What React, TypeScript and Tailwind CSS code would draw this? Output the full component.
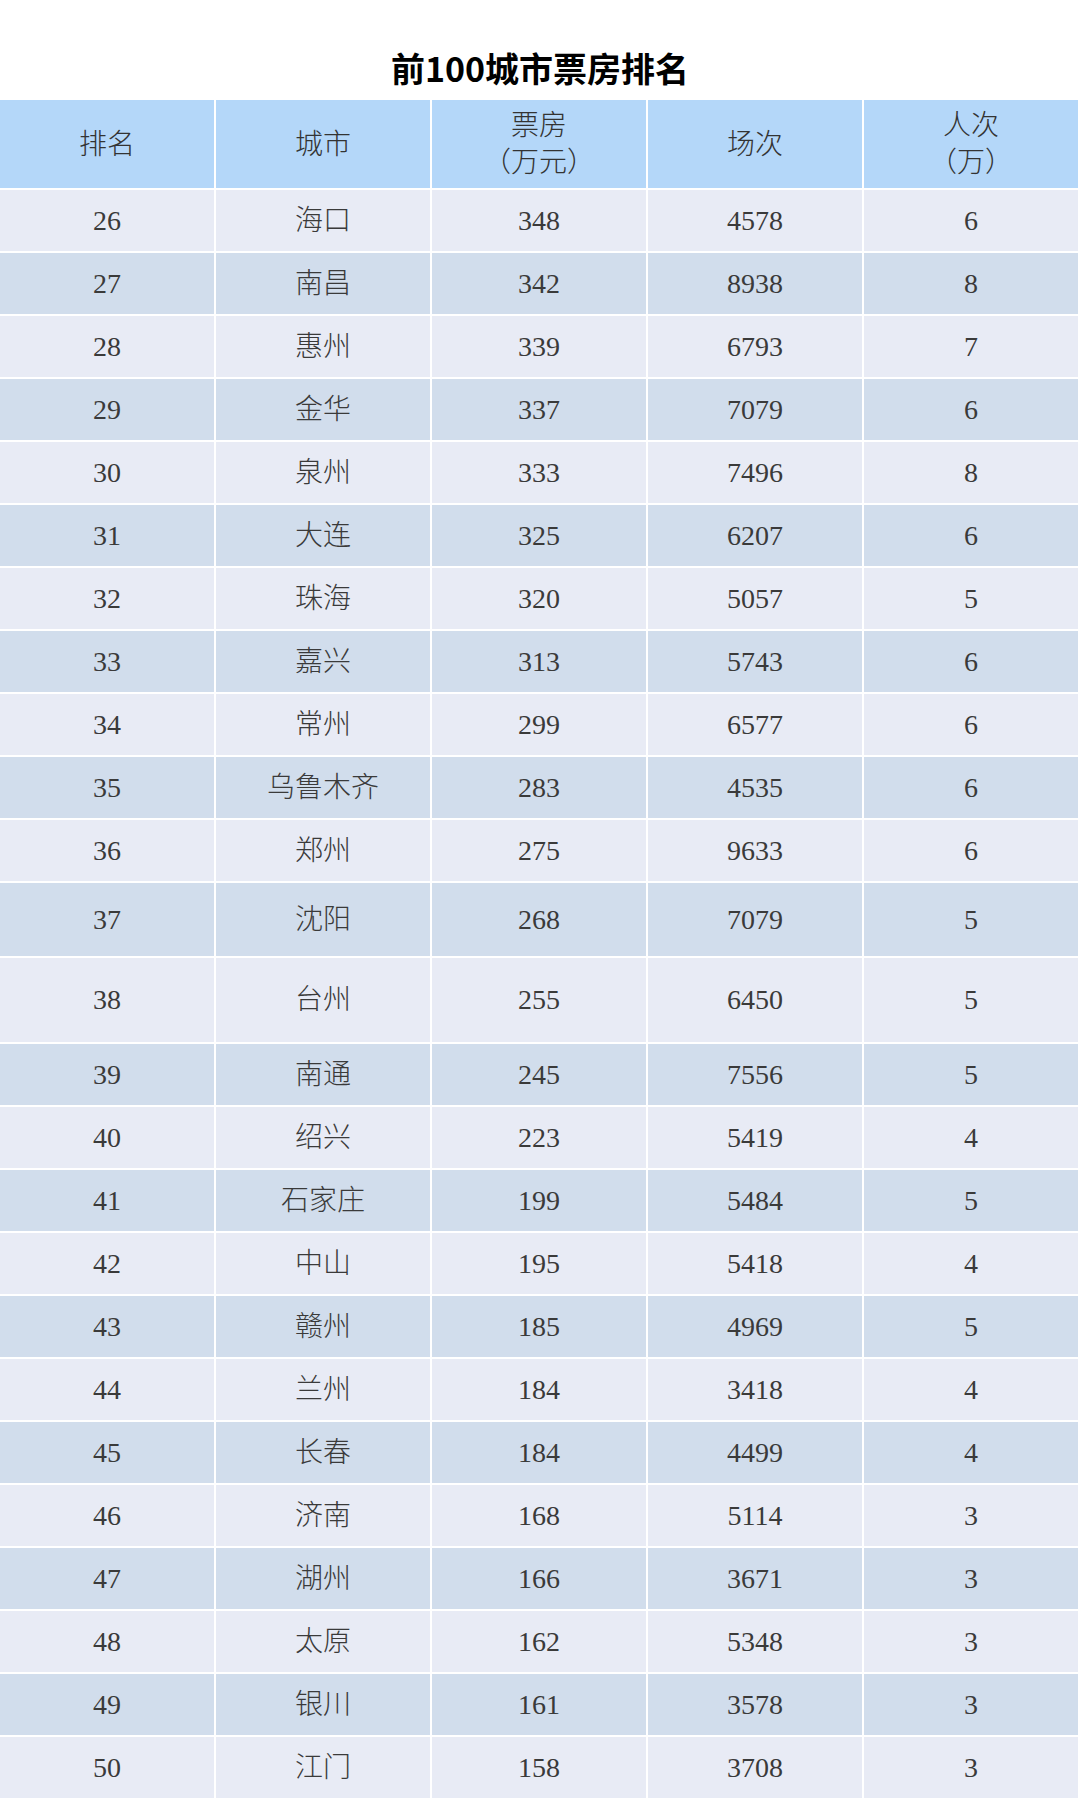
import React from "react";

type Row = [number, string, number, number, number];

const rows: Row[] = [
  [26, "海口", 348, 4578, 6],
  [27, "南昌", 342, 8938, 8],
  [28, "惠州", 339, 6793, 7],
  [29, "金华", 337, 7079, 6],
  [30, "泉州", 333, 7496, 8],
  [31, "大连", 325, 6207, 6],
  [32, "珠海", 320, 5057, 5],
  [33, "嘉兴", 313, 5743, 6],
  [34, "常州", 299, 6577, 6],
  [35, "乌鲁木齐", 283, 4535, 6],
  [36, "郑州", 275, 9633, 6],
  [37, "沈阳", 268, 7079, 5],
  [38, "台州", 255, 6450, 5],
  [39, "南通", 245, 7556, 5],
  [40, "绍兴", 223, 5419, 4],
  [41, "石家庄", 199, 5484, 5],
  [42, "中山", 195, 5418, 4],
  [43, "赣州", 185, 4969, 5],
  [44, "兰州", 184, 3418, 4],
  [45, "长春", 184, 4499, 4],
  [46, "济南", 168, 5114, 3],
  [47, "湖州", 166, 3671, 3],
  [48, "太原", 162, 5348, 3],
  [49, "银川", 161, 3578, 3],
  [50, "江门", 158, 3708, 3],
];

const cellFont = { fontFamily: '"Liberation Serif", "Noto Sans CJK SC", serif' };

// rows 37 and 38 are taller in the source image
const rowHeight = (rank: number) => {
  if (rank === 37) return "h-[73px]";
  if (rank === 38) return "h-[84px]";
  return "h-[61px]";
};

const HeaderCell = ({ lines }: { lines: string[] }) => (
  <div className="flex flex-col items-center justify-center bg-[#b4d7f9] text-[28px] font-light leading-[37px] text-[#333]">
    {lines.map(l => (
      <span key={l}>{l}</span>
    ))}
  </div>
);

export default function App() {
  return (
    <div className="w-[1080px] min-h-[1800px] bg-white" style={cellFont}>
      <div className="flex h-[100px] justify-center pt-[48px]">
        <h1
          className="text-[34px] font-bold leading-[40px] text-black"
          style={{ fontFamily: '"Noto Sans CJK SC", sans-serif' }}
        >
          前100城市票房排名
        </h1>
      </div>

      <div className="flex w-[1078px] flex-col gap-[2px]">
        <div className="grid h-[88px] grid-cols-5 gap-[2px]">
          <HeaderCell lines={["排名"]} />
          <HeaderCell lines={["城市"]} />
          <HeaderCell lines={["票房", "（万元）"]} />
          <HeaderCell lines={["场次"]} />
          <HeaderCell lines={["人次", "（万）"]} />
        </div>

        {rows.map((r, i) => {
          const bg = i % 2 === 0 ? "bg-[#e8ebf5]" : "bg-[#d1ddec]";
          return (
            <div key={r[0]} className={`grid grid-cols-5 gap-[2px] ${rowHeight(r[0])}`}>
              {r.map((v, j) => (
                <div
                  key={j}
                  className={`flex items-center justify-center text-[28px] font-light text-[#3a3a3a] ${bg}`}
                >
                  {v}
                </div>
              ))}
            </div>
          );
        })}
      </div>
    </div>
  );
}
